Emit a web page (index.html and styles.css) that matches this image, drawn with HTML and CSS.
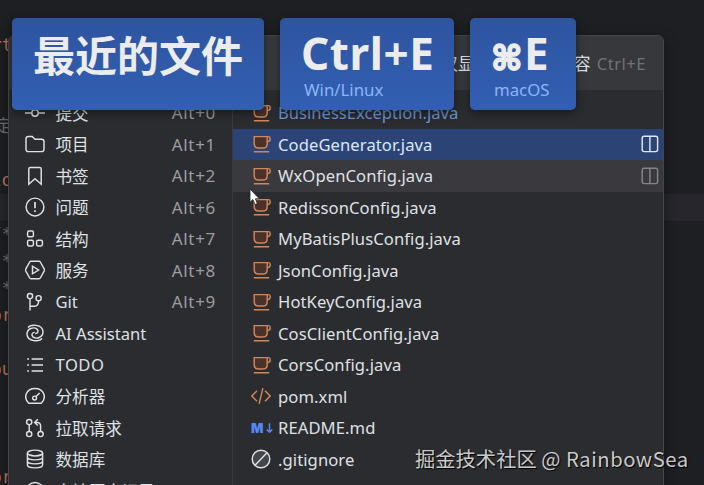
FILE: index.html
```
<!DOCTYPE html>
<html lang="zh-CN">
<head>
    <meta charset="UTF-8">
    <title>最近的文件</title>
    <link rel="stylesheet" href="styles.css">
</head>
<body>
<svg class="defs">
    <symbol id="commit" viewBox="0 0 20 20"><circle cx="10" cy="10" r="3.2"/><path d="M0 10h6.8M13.2 10H20"/></symbol>
    <symbol id="folder" viewBox="0 0 20 20"><path d="M1 4.8Q1 2.4 3.4 2.4H7.2L10 5.2H16.6Q19 5.2 19 7.6V15.2Q19 17.6 16.6 17.6H3.4Q1 17.6 1 15.2Z"/></symbol>
    <symbol id="bookmark" viewBox="0 0 20 20"><path d="M3.8 18.2V3Q3.8 1.4 5.4 1.4H14.6Q16.2 1.4 16.2 3V18.2L10 12.8Z"/></symbol>
    <symbol id="problem" viewBox="0 0 20 20"><circle cx="10" cy="10" r="8.9"/><path d="M10 5V11.3M10 13.2V15" stroke-width="1.7"/></symbol>
    <symbol id="structure" viewBox="0 0 20 20"><rect x="2.6" y="2" width="5.8" height="5.8" rx="1.4"/><rect x="2.6" y="11.2" width="5.8" height="5.8" rx="1.4"/><rect x="11.6" y="11.2" width="5.8" height="5.8" rx="1.4"/></symbol>
    <symbol id="service" viewBox="0 0 20 20"><path d="M5.9 1.3H14.1Q14.9 1.3 15.3 2L19.3 9.2Q19.7 10 19.3 10.8L15.3 18Q14.9 18.7 14.1 18.7H5.9Q5.1 18.7 4.7 18L.7 10.8Q.3 10 .7 9.2L4.7 2Q5.1 1.3 5.9 1.3Z"/><path d="M7.5 6.2V13.8L13.6 10Z"/></symbol>
    <symbol id="git" viewBox="0 0 20 20"><circle cx="5" cy="4" r="2.6"/><circle cx="13.6" cy="6.2" r="2.6"/><path d="M5 6.6V18.6M5 14.2H9.6Q13.6 14.2 13.6 8.8"/></symbol>
    <symbol id="ai" viewBox="0 0 20 20"><path d="M3 4.6C5.5 1 17.5 1 18 8.6C18.2 14.6 11 16.5 8 13.9C6 12 7 9.6 9.8 9.4"/><path d="M17 15.4C14.5 19 2.5 19 2 11.4C1.8 5.4 9 3.5 12 6.1C14 8 13 10.4 10.2 10.6"/></symbol>
    <symbol id="todo" viewBox="0 0 20 20"><path d="M6.6 4H18M6.6 10H18M6.6 16H18M2.2 4H4M2.2 10H4M2.2 16H4"/></symbol>
    <symbol id="profiler" viewBox="0 0 20 20"><path d="M3.8 17.2C-2 12 .9 2.4 10 2.4S22 12 16.2 17.2Z" stroke-linejoin="round"/><circle cx="9.6" cy="12" r="1.9"/><path d="M11 10.6L14.6 7"/></symbol>
    <symbol id="pull" viewBox="0 0 20 20"><circle cx="4.2" cy="4" r="2.6"/><circle cx="4.2" cy="16" r="2.6"/><circle cx="15.6" cy="16" r="2.6"/><path d="M4.2 6.6V13.4M15.6 13.4V8.2Q15.6 4.4 12.4 4.4H9.8M12.8 1.2L9.6 4.4L12.8 7.6"/></symbol>
    <symbol id="database" viewBox="0 0 20 20"><ellipse cx="10" cy="4" rx="7.6" ry="2.9"/><path d="M2.4 4V16C2.4 19.8 17.6 19.8 17.6 16V4M2.4 8C2.4 11.8 17.6 11.8 17.6 8M2.4 12C2.4 15.8 17.6 15.8 17.6 12"/></symbol>
    <symbol id="history" viewBox="0 0 20 20"><circle cx="10" cy="10" r="8.6"/><path d="M10 5V10L13 12"/></symbol>
    <symbol id="java" viewBox="0 0 20 20"><path class="cup" d="M3.2 2.6H16.2V9.4Q16.2 14 11.8 14H7.4Q3.2 14 3.2 9.6Z"/><path d="M16.2 2.6H17.6Q19.2 2.6 19.2 4.4V5Q19.2 7.6 16.2 7.6M2.8 17.7H18.2"/></symbol>
    <symbol id="xml" viewBox="0 0 20 20"><path d="M6 4.8L.8 10L6 15.2M14 4.8L19.2 10L14 15.2M11.9 2.2L8.1 17.8"/></symbol>
    <symbol id="ignore" viewBox="0 0 20 20"><circle cx="10" cy="10" r="8.8" fill="#43464b"/><path d="M4 16.2L16 3.8"/></symbol>
    <symbol id="down" viewBox="0 0 8 14"><path d="M4 1.4V12M.8 8.8L4 12L7.2 8.8"/></symbol>
    <symbol id="split" viewBox="0 0 18 18"><rect x="1.2" y="1.2" width="15.4" height="15.4" rx="2"/><path d="M8.9 1.2V16.6"/></symbol>
</svg>

<div class="editor">
    <div class="line"></div>
    <div class="line kw">rt</div>
    <div class="line"></div>
    <div class="line"></div>
    <div class="line doc">定</div>
    <div class="line"></div>
    <div class="line kw">lo</div>
    <div class="line current"></div>
    <div class="line doc">/*</div>
    <div class="line doc">*</div>
    <div class="line doc">*</div>
    <div class="line kw">or</div>
    <div class="line"></div>
    <div class="line kw">ou</div>
    <div class="line"></div>
    <div class="line doc">- </div>
    <div class="line"></div>
    <div class="line kw">or</div>
</div>

<div class="popup">
    <div class="popup-head">
        <span>仅显示已编辑的内容</span>
        <span class="head-key">Ctrl+E</span>
    </div>
    <div class="popup-body">
        <ul class="tools">
            <li><svg class="icon"><use href="#commit"/></svg>提交<span class="key">Alt+0</span></li>
            <li><svg class="icon"><use href="#folder"/></svg>项目<span class="key">Alt+1</span></li>
            <li><svg class="icon"><use href="#bookmark"/></svg>书签<span class="key">Alt+2</span></li>
            <li><svg class="icon"><use href="#problem"/></svg>问题<span class="key">Alt+6</span></li>
            <li><svg class="icon"><use href="#structure"/></svg>结构<span class="key">Alt+7</span></li>
            <li><svg class="icon"><use href="#service"/></svg>服务<span class="key">Alt+8</span></li>
            <li><svg class="icon"><use href="#git"/></svg>Git<span class="key">Alt+9</span></li>
            <li><svg class="icon"><use href="#ai"/></svg>AI Assistant</li>
            <li><svg class="icon"><use href="#todo"/></svg><span class="todo">TODO</span></li>
            <li><svg class="icon"><use href="#profiler"/></svg>分析器</li>
            <li><svg class="icon"><use href="#pull"/></svg>拉取请求</li>
            <li><svg class="icon"><use href="#database"/></svg>数据库</li>
            <li><svg class="icon"><use href="#history"/></svg>本地历史记录</li>
        </ul>
        <ul class="files">
            <li class="changed"><svg class="icon java"><use href="#java"/></svg>BusinessException.java</li>
            <li class="selected"><svg class="icon java"><use href="#java"/></svg>CodeGenerator.java<svg class="split"><use href="#split"/></svg></li>
            <li class="hover"><svg class="icon java"><use href="#java"/></svg>WxOpenConfig.java<svg class="split"><use href="#split"/></svg></li>
            <li><svg class="icon java"><use href="#java"/></svg>RedissonConfig.java</li>
            <li><svg class="icon java"><use href="#java"/></svg>MyBatisPlusConfig.java</li>
            <li><svg class="icon java"><use href="#java"/></svg>JsonConfig.java</li>
            <li><svg class="icon java"><use href="#java"/></svg>HotKeyConfig.java</li>
            <li><svg class="icon java"><use href="#java"/></svg>CosClientConfig.java</li>
            <li><svg class="icon java"><use href="#java"/></svg>CorsConfig.java</li>
            <li><svg class="icon java"><use href="#xml"/></svg>pom.xml</li>
            <li><span class="icon md">M<svg class="md-arrow"><use href="#down"/></svg></span>README.md</li>
            <li><svg class="icon"><use href="#ignore"/></svg>.gitignore</li>
        </ul>
    </div>
</div>

<div class="cards">
    <div class="card card-name"><b class="cjk">最近的文件</b></div>
    <div class="card card-win"><b>Ctrl+E</b><span>Win/Linux</span></div>
    <div class="card card-mac"><b><i class="cmd">⌘</i>E</b><span>macOS</span></div>
</div>

<svg class="cursor" viewBox="0 0 12 18"><path d="M1 1V14.2L4 11.6L6 16.6L8.4 15.6L6.4 10.8H10.4Z"/></svg>
<div class="watermark">掘金技术社区 <span>@ RainbowSea</span></div>
</body>
</html>
```
FILE: styles.css
```
*{
    margin: 0;
    padding: 0;
    box-sizing: border-box;
}
ul{
    list-style: none;
}
body{
    position: relative;
    width: 704px;
    height: 485px;
    overflow: hidden;
    background-color: #1e1f22;
    color: #dfe1e5;
    font: 16.6px "Noto Sans", "Noto Sans CJK SC", sans-serif;
}
svg{
    flex: none;
    fill: none;
    stroke: currentColor;
    stroke-width: 1.45;
}
.defs{
    display: none;
}

/* editor behind the popup */
.editor{
    height: 485px;
    padding-top: 5px;
    font: 17px "DejaVu Sans Mono", "Noto Sans CJK SC", monospace;
}
.line{
    height: 27px;
    line-height: 27px;
    display: flex;
    white-space: pre;
}
.kw,
.doc{
    width: 12px;
    justify-content: flex-end;
}
.kw{
    color: #b9785a;
}
.doc{
    color: #6c7075;
}
.current{
    background-color: #26262c;
}

/* popup */
.popup{
    position: absolute;
    left: 8px;
    top: 35px;
    width: 656px;
    height: 470px;
    background-color: #2b2c2f;
    border: 1px solid #44464a;
    border-radius: 6px;
    box-shadow: 0 4px 14px rgba(0, 0, 0, 0.4);
}
.popup-head{
    display: flex;
    align-items: center;
    justify-content: flex-end;
    gap: 6px;
    height: 54px;
    padding-right: 17px;
    background-color: #37383c;
    border-radius: 5px 5px 0 0;
}
.head-key{
    color: #6f7278;
    font-size: 16.6px;
    letter-spacing: 0.5px;
}
.popup-body{
    display: flex;
    padding-top: 7px;
}
.popup-body li{
    display: flex;
    align-items: center;
    height: 31.53px;
    white-space: nowrap;
}
.tools{
    width: 224px;
    border-right: 1px solid #393b40;
}
.tools li{
    padding: 0 16px 0 16px;
}
.icon{
    width: 20px;
    height: 20px;
    margin-right: 10.5px;
}
.key{
    margin-left: auto;
    color: #9b9da3;
    font-size: 17px;
    letter-spacing: 0.7px;
}
.todo{
    letter-spacing: 0.5px;
}
.files{
    flex: 1;
}
.files li{
    padding: 0 4px 0 18px;
    letter-spacing: 0.08px;
}
.files .icon{
    margin-right: 7px;
}
.files .changed{
    color: #6c95d9;
    letter-spacing: 0;
}
.files .selected{
    background-color: #2c4475;
    color: #dde6f7;
}
.files .hover{
    background-color: #3a393e;
}
.java{
    color: #d18758;
}
.cup{
    fill: #4a3129;
}
.split{
    width: 18px;
    height: 18px;
    margin-left: auto;
}
.hover .split{
    color: #85868a;
}
.md{
    display: flex;
    align-items: center;
    gap: 2px;
    color: #548af7;
    font: 900 13px "Inter", "Noto Sans", sans-serif;
}
.md-arrow{
    width: 7px;
    height: 12px;
    stroke-width: 1.7;
}

/* shortcut cards */
.cards{
    position: absolute;
    left: 12px;
    top: 18px;
    display: flex;
    gap: 16px;
}
.card{
    display: flex;
    flex-direction: column;
    height: 92px;
    padding: 9px 0 0 21px;
    border-radius: 5px;
    background: linear-gradient(#2e549f, #325fb3);
    box-shadow: 0 3px 10px rgba(0, 0, 0, 0.45);
    color: #ececec;
}
.card b{
    height: 53px;
    font-size: 44px;
    line-height: 53px;
    white-space: nowrap;
    letter-spacing: 0.6px;
}
.card span{
    padding-left: 3px;
    color: #8ab6f8;
    font-size: 16.8px;
    line-height: 20px;
}
.card .cjk{
    font-family: "Noto Sans CJK SC", sans-serif;
    font-size: 42px;
    letter-spacing: 0;
}
.card-name{
    width: 252px;
}
.card-win{
    width: 174px;
}
.card-mac{
    width: 106px;
}
.cmd{
    display: inline-block;
    width: 33px;
    font: bold 34px/40px "DejaVu Sans", sans-serif;
    -webkit-text-stroke: 1.8px #ececec;
}

.cursor{
    position: absolute;
    left: 249px;
    top: 188px;
    width: 12px;
    height: 18px;
    fill: #fff;
    stroke: #222;
    stroke-width: 0.8;
}
.watermark{
    position: absolute;
    left: 415px;
    top: 443px;
    color: #c9c9ca;
    font: 20.3px/30px "Noto Sans CJK SC", sans-serif;
    white-space: nowrap;
    text-shadow: 1px 1px 1px #000;
}
.watermark span{
    letter-spacing: 0.5px;
}
```
